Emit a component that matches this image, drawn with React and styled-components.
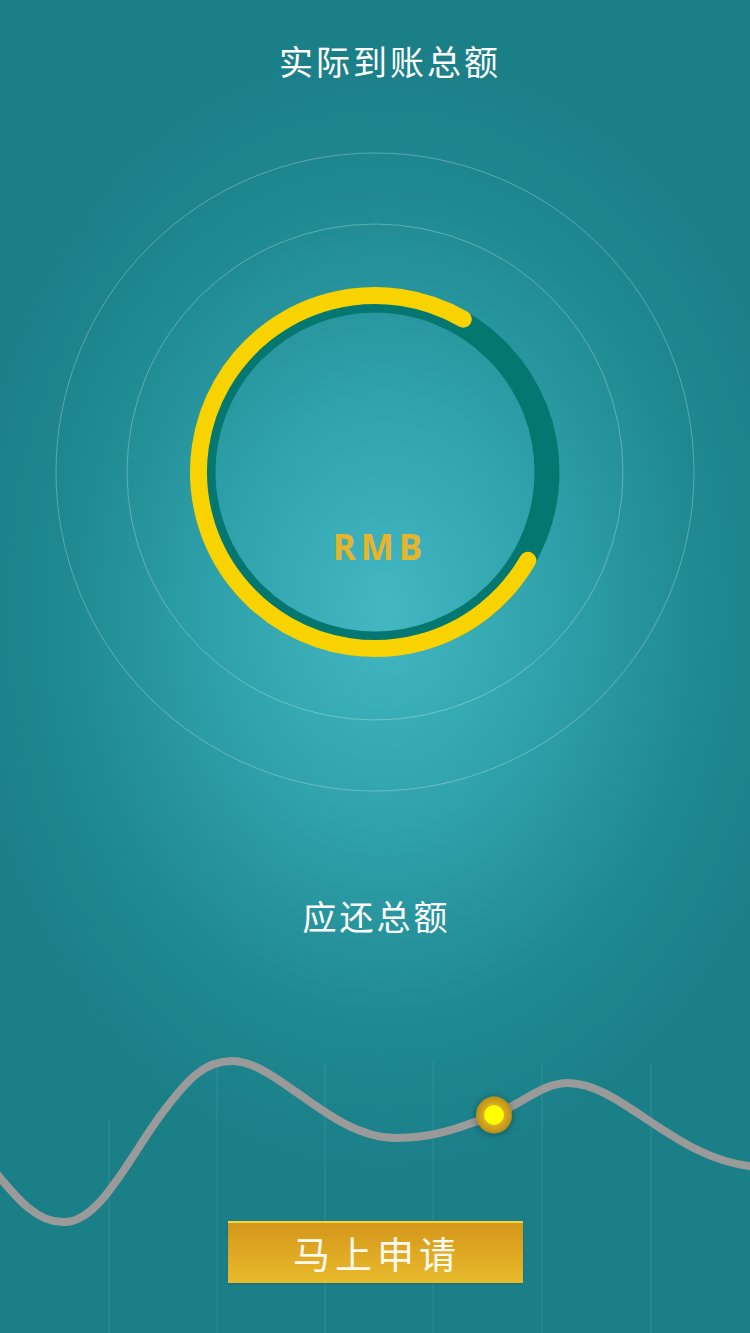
import React from "react";
import styled, { createGlobalStyle } from "styled-components";

const GlobalStyle = createGlobalStyle`
	html, body {
		margin: 0;
		padding: 0;
		background: #1b7f88;
	}
`;

const Page = styled.div`
	width: 750px;
	min-height: 1333px;
	display: flex;
	flex-direction: column;
	align-items: center;
	overflow: hidden;
	background: radial-gradient(
		ellipse 430px 560px at 385px 610px,
		#43b8c2 0%,
		#2fa2ab 38%,
		#1f8890 75%,
		#1b7f88 100%
	);
	font-family: "Noto Sans CJK SC", "Noto Sans", sans-serif;
`;

const Heading = styled.div`
	margin-top: ${props => props.$top}px;
	padding-left: ${props => props.$shift || 0}px;
	font-size: 34px;
	line-height: 41px;
	letter-spacing: 3px;
	color: #ffffff;
`;

const RingStage = styled.div`
	margin-top: 71px;
	width: 640px;
	height: 640px;
	display: grid;
	justify-items: center;
	& > * {
		grid-area: 1 / 1;
	}
`;

const RingLabel = styled.div`
	align-self: start;
	margin-top: 375px;
	padding-left: 10px;
	font-family: "Open Sans", "Noto Sans", sans-serif;
	font-weight: 700;
	font-size: 35px;
	line-height: 40px;
	letter-spacing: 5px;
	color: #e6b52b;
`;

const ChartArea = styled.div`
	margin-top: auto;
	width: 750px;
	height: 293px;
	display: grid;
	justify-items: center;
	& > * {
		grid-area: 1 / 1;
	}
`;

const ApplyButton = styled.button`
	align-self: start;
	margin-top: 181px;
	width: 295px;
	height: 62px;
	padding: 0 0 0 4px;
	border: none;
	border-top: 2px solid #f2d53a;
	background: linear-gradient(to bottom, #d4961b 0%, #e1ac24 60%, #e8bb2c 100%);
	box-shadow: 0 1px 2px rgba(0, 0, 0, 0.15);
	color: #fffaf0;
	font-family: "Noto Sans CJK SC", "Noto Sans", sans-serif;
	font-size: 37px;
	letter-spacing: 5px;
	cursor: pointer;
	z-index: 1;
`;

const ProgressRing = () => (
	<svg width="640" height="640" viewBox="0 0 640 640">
		<circle cx="320" cy="320" r="319" fill="none" stroke="rgba(255,255,255,0.28)" strokeWidth="1" />
		<circle cx="320" cy="320" r="248" fill="none" stroke="rgba(255,255,255,0.28)" strokeWidth="1" />
		<circle cx="320" cy="320" r="172" fill="none" stroke="#047870" strokeWidth="25" />
		<path
			d="M 408.25 167.15 A 176.5 176.5 0 1 0 472.85 408.25"
			fill="none"
			stroke="#f8d300"
			strokeWidth="17"
			strokeLinecap="round"
		/>
	</svg>
);

const gridLines = [
	{ x: 109, top: 80 },
	{ x: 217, top: 22 },
	{ x: 325, top: 22 },
	{ x: 433, top: 22 },
	{ x: 542, top: 22 },
	{ x: 651, top: 22 },
];

const WaveChart = () => (
	<svg width="750" height="293" viewBox="0 0 750 293">
		<defs>
			<filter id="glow" x="-1" y="-1" width="3" height="3">
				<feDropShadow dx="0" dy="1" stdDeviation="3.5" floodColor="#000" floodOpacity="0.35" />
			</filter>
			<radialGradient id="knob" cx="50%" cy="50%" r="50%">
				<stop offset="60%" stopColor="#d9aa22" />
				<stop offset="100%" stopColor="#bb8f14" />
			</radialGradient>
		</defs>
		{gridLines.map(line => (
			<line
				key={line.x}
				x1={line.x}
				x2={line.x}
				y1={line.top}
				y2="293"
				stroke="rgba(255,255,255,0.1)"
				strokeWidth="1"
			/>
		))}
		<path
			d="M -8 128 C 18 160, 38 184, 66 182 C 100 180, 128 120, 160 76 C 188 38, 205 21, 232 21 C 278 21, 330 98, 396 98 C 440 98, 468 84, 494 75 C 522 64, 542 43, 568 43 C 622 43, 676 122, 758 127"
			fill="none"
			stroke="#9a9a9a"
			strokeWidth="8"
			strokeLinecap="round"
		/>
		<g filter="url(#glow)">
			<ellipse cx="494" cy="75" rx="18" ry="18.5" fill="url(#knob)" />
		</g>
		<circle cx="494" cy="75" r="10" fill="#ffff00" />
	</svg>
);

const App = () => {
	return (
		<Page>
			<GlobalStyle />
			<Heading $top={40} $shift={30}>实际到账总额</Heading>
			<RingStage>
				<ProgressRing />
				<RingLabel>RMB</RingLabel>
			</RingStage>
			<Heading $top={103} $shift={3}>应还总额</Heading>
			<ChartArea>
				<WaveChart />
				<ApplyButton>马上申请</ApplyButton>
			</ChartArea>
		</Page>
	);
};

export default App;
